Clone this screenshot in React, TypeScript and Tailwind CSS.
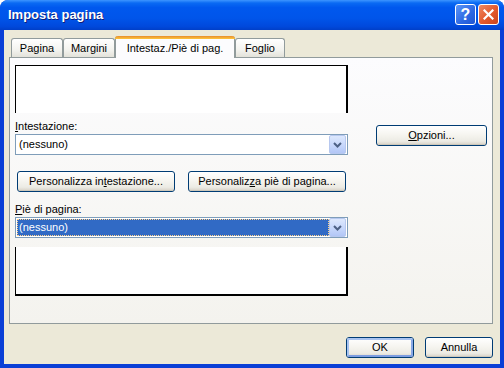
import React from 'react'

const font = { fontFamily: '"Liberation Sans", Arial, sans-serif' }

function XpButton({ children, className = '', isDefault = false }: { children: React.ReactNode; className?: string; isDefault?: boolean }) {
  return (
    <div
      className={`h-[21px] rounded-[3px] border border-[#003c74] bg-[linear-gradient(to_bottom,#ffffff_0%,#f6f5f0_45%,#ecebe4_80%,#d6d0c5_100%)] flex items-center justify-center text-[11px] text-black ${className}`}
    >
      <div
        className={`w-full h-full rounded-[2px] flex items-center justify-center ${isDefault ? 'border-[2px] border-[#a8c3f0] border-b-[#7d9de0] border-r-[#8aa9e6]' : 'border border-transparent border-b-[#cdc8bb]'}`}
      >
        {children}
      </div>
    </div>
  )
}

function ComboArrow() {
  return (
    <div className="w-[17px] h-[19px] rounded-[2px] border border-[#b7c8ef] bg-[linear-gradient(to_bottom,#dde8fd,#c4d5fb_60%,#b2c6f6)] flex items-center justify-center">
      <svg width="9" height="6" viewBox="0 0 9 6">
        <path d="M1 1 L4.5 4.5 L8 1" stroke="#4d6185" strokeWidth="2" fill="none" />
      </svg>
    </div>
  )
}

function Combo({ selected = false }: { selected?: boolean }) {
  return (
    <div className="h-[21px] w-[333px] border border-[#7f9db9] bg-white flex items-center pl-[1px] pr-[1px]">
      <div className="flex-1 h-[17px] flex items-center">
        {selected ? (
          <div className="w-full h-full bg-[#316ac5] text-white text-[11px] leading-[15px] pl-[1px] border border-dotted border-[#ffd28a]">
            (nessuno)
          </div>
        ) : (
          <div className="text-[11px] pl-[2px] text-black">(nessuno)</div>
        )}
      </div>
      <ComboArrow />
    </div>
  )
}

function Tab({ label, active = false, w }: { label: string; active?: boolean; w: string }) {
  if (active) {
    return (
      <div className={`${w} h-[22px] -mb-[1px] relative z-10 rounded-t-[3px] border-x border-[#919b9c] bg-[#fcfcfe] flex flex-col`}>
        <div className="h-[3px] rounded-t-[3px] bg-[linear-gradient(to_bottom,#e68b2c,#ffc73c)] -mx-[1px]" />
        <div className="flex-1 flex items-center justify-center text-[11px] text-black">{label}</div>
      </div>
    )
  }
  return (
    <div className={`${w} h-[19px] rounded-t-[3px] border border-b-0 border-[#919b9c] bg-[linear-gradient(to_bottom,#ffffff,#f3f3ef_60%,#e3e2da)] flex items-center justify-center text-[11px] text-black`}>
      {label}
    </div>
  )
}

export default function App() {
  return (
    <div className="w-[504px] h-[368px] bg-white" style={font}>
      <div className="w-[504px] h-[368px] rounded-t-[8px] overflow-hidden flex flex-col bg-[#0a3fd6]">
        {/* title bar */}
        <div className="h-[30px] shrink-0 flex items-center pl-[8px] pr-[5px] bg-[linear-gradient(to_bottom,#3d95ff_0%,#0a6af3_10%,#0058ee_25%,#0055ea_60%,#0049dc_88%,#003fc8_100%)]">
          <div className="text-white text-[13px] font-bold flex-1 mt-[-1px] [text-shadow:1px_1px_0_#0f1f7a]">Imposta pagina</div>
          <div className="w-[21px] h-[21px] rounded-[3px] border border-white bg-[linear-gradient(to_bottom_right,#5c95f7,#2c67e2_60%,#1f55d3)] flex items-center justify-center text-white text-[16px] font-bold leading-none mr-[2px] mt-[-1px]">
            ?
          </div>
          <div className="w-[21px] h-[21px] rounded-[3px] border border-white bg-[linear-gradient(to_bottom_right,#f08a63,#e2582c_55%,#c8441d)] flex items-center justify-center mt-[-1px]">
            <svg width="11" height="11" viewBox="0 0 11 11">
              <path d="M1.5 1.5 L9.5 9.5 M9.5 1.5 L1.5 9.5" stroke="white" strokeWidth="2.2" strokeLinecap="square" />
            </svg>
          </div>
        </div>

        {/* body */}
        <div className="flex-1 mx-[4px] mb-[4px] bg-[#ece9d8] flex flex-col pt-[6px] pl-[5px] pr-[7px]">
          {/* tabs */}
          <div className="flex items-end pl-[2px] h-[21px]">
            <Tab label="Pagina" w="w-[52px]" />
            <Tab label="Margini" w="w-[52px]" />
            <Tab label="Intestaz./Piè di pag." w="w-[120px]" active />
            <Tab label="Foglio" w="w-[50px]" />
          </div>

          {/* panel */}
          <div className="h-[267px] border border-[#919b9c] bg-[linear-gradient(to_bottom,#fcfcfe,#f4f3ee)] flex pl-[5px]">
            <div className="w-[333px] flex flex-col">
              {/* header preview */}
              <div className="mt-[7px] h-[48px] w-[333px] bg-white border-l border-t border-black border-r-[2px]" />

              <div className="mt-[7px] h-[13px] leading-[13px] text-[11px] text-black">
                <span className="underline">I</span>ntestazione:
              </div>
              <div className="mt-[1px]">
                <Combo />
              </div>

              <div className="mt-[16px] flex gap-[13px] pl-[2px]">
                <XpButton className="w-[158px]">
                  <span>
                    Personalizza in<span className="underline">t</span>estazione...
                  </span>
                </XpButton>
                <XpButton className="w-[158px]">
                  <span>
                    Personaliz<span className="underline">z</span>a piè di pagina...
                  </span>
                </XpButton>
              </div>

              <div className="mt-[11px] h-[13px] leading-[13px] text-[11px] text-black">
                <span className="underline">P</span>iè di pagina:
              </div>
              <div className="mt-[1px]">
                <Combo selected />
              </div>

              {/* footer preview */}
              <div className="mt-[9px] h-[49px] w-[333px] bg-white border-l border-black border-b-[2px] border-r-[2px]" />
            </div>

            <div className="ml-[28px] pt-[67px]">
              <XpButton className="w-[111px]">
                <span>
                  <span className="underline">O</span>pzioni...
                </span>
              </XpButton>
            </div>
          </div>

          {/* bottom buttons */}
          <div className="mt-[13px] flex justify-end gap-[11px]">
            <XpButton className="w-[68px]" isDefault>
              OK
            </XpButton>
            <XpButton className="w-[68px]">Annulla</XpButton>
          </div>
        </div>
      </div>
    </div>
  )
}
